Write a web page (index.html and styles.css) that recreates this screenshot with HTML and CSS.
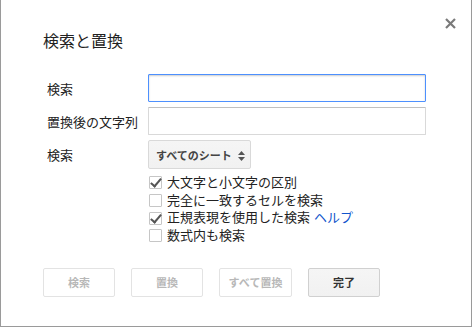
FILE: index.html
```html
<!DOCTYPE html>
<html lang="ja">
<head>
  <meta charset="UTF-8" />
  <title>検索と置換</title>
  <link rel="stylesheet" href="styles.css">
</head>
<body>
  <div class="dialog">
    <span class="close" title="閉じる">
      <svg width="11" height="11" viewBox="0 0 11 11"><path d="M1 1L10 10M10 1L1 10" stroke="#7a7a7a" stroke-width="2.2" /></svg>
    </span>
    <h1>検索と置換</h1>

    <div class="form">
      <label for="find">検索</label>
      <input type="text" id="find" class="focused">

      <label for="replace">置換後の文字列</label>
      <input type="text" id="replace">

      <label>検索</label>
      <div>
        <button class="select">すべてのシート <span class="arrows"><svg width="7" height="10" viewBox="0 0 7 10"><path d="M3.5 0L7 4H0Z M3.5 10L0 6H7Z" fill="#555" /></svg></span></button>
      </div>

      <span></span>
      <ul class="options">
        <li><span class="box checked"></span>大文字と小文字の区別</li>
        <li><span class="box"></span>完全に一致するセルを検索</li>
        <li><span class="box checked"></span>正規表現を使用した検索 <a href="#">ヘルプ</a></li>
        <li><span class="box"></span>数式内も検索</li>
      </ul>
    </div>

    <div class="buttons">
      <button class="btn" disabled>検索</button>
      <button class="btn" disabled>置換</button>
      <button class="btn wide" disabled>すべて置換</button>
      <button class="btn done">完了</button>
    </div>
  </div>
</body>
</html>
```

FILE: styles.css
```css
body {
  margin: 0;
  background: #fff;
  font-family: Arial, "Liberation Sans", "Noto Sans CJK JP", sans-serif;
  color: #222;
}

.dialog {
  position: relative;
  box-sizing: border-box;
  width: 472px;
  height: 328px;
  margin-top: -1px;
  border: 1px solid #9a9a9a;
  background: #fff;
  padding: 33px 0 0 42px;
}

.close {
  position: absolute;
  top: 18px;
  right: 15px;
  line-height: 0;
}

h1 {
  margin: 0;
  font-size: 16px;
  font-weight: normal;
  line-height: 18px;
  color: #222;
}

.form {
  display: grid;
  grid-template-columns: 101px 278px;
  row-gap: 5px;
  align-items: center;
  margin-top: 23px;
  padding-left: 4px;
  font-size: 13px;
}

label {
  color: #222;
}

input {
  box-sizing: border-box;
  height: 28px;
  width: 278px;
  margin: 0;
  border: 1px solid #d9d9d9;
  border-top-color: #c0c0c0;
  border-radius: 1px;
  padding: 0 8px;
  font-size: 13px;
}

input.focused {
  border-color: #4d90fe;
  box-shadow: inset 0 1px 2px rgba(0, 0, 0, 0.2);
  outline: none;
}

.select {
  box-sizing: border-box;
  height: 29px;
  width: 103px;
  padding: 0 0 0 7px;
  border: 1px solid #d9d9d9;
  border-radius: 2px;
  background: linear-gradient(#f5f5f5, #f1f1f1);
  font-family: inherit;
  font-size: 11px;
  font-weight: bold;
  color: #444;
  text-align: left;
}

.arrows {
  margin-left: 3px;
  vertical-align: -1px;
}

.options {
  list-style: none;
  margin: 0;
  padding: 0;
  font-size: 13px;
  line-height: 17.7px;
}

.options li {
  display: flex;
  align-items: center;
}

.options a {
  color: #15c;
  text-decoration: none;
  margin-left: 4px;
}

.box {
  position: relative;
  box-sizing: border-box;
  width: 13px;
  height: 13px;
  margin: 0 5px 0 1px;
  border: 1px solid #c6c6c6;
  border-radius: 1px;
  background: #fff;
}

.box.checked::after {
  content: "";
  position: absolute;
  left: 3px;
  top: -1px;
  width: 4px;
  height: 9px;
  border: solid #555;
  border-width: 0 2px 2px 0;
  transform: rotate(40deg);
}

.buttons {
  display: flex;
  gap: 16px;
  margin-top: 23px;
  padding-left: 0;
}

.btn {
  box-sizing: border-box;
  width: 72px;
  height: 29px;
  border: 1px solid #e3e3e3;
  border-radius: 2px;
  background: #fff;
  font-family: inherit;
  font-size: 11px;
  font-weight: bold;
  color: #b8b8b8;
}

.btn.wide {
  width: 73px;
}

.btn.done {
  border-color: #d0d0d0;
  background: linear-gradient(#f5f5f5, #f1f1f1);
  color: #333;
}
```
